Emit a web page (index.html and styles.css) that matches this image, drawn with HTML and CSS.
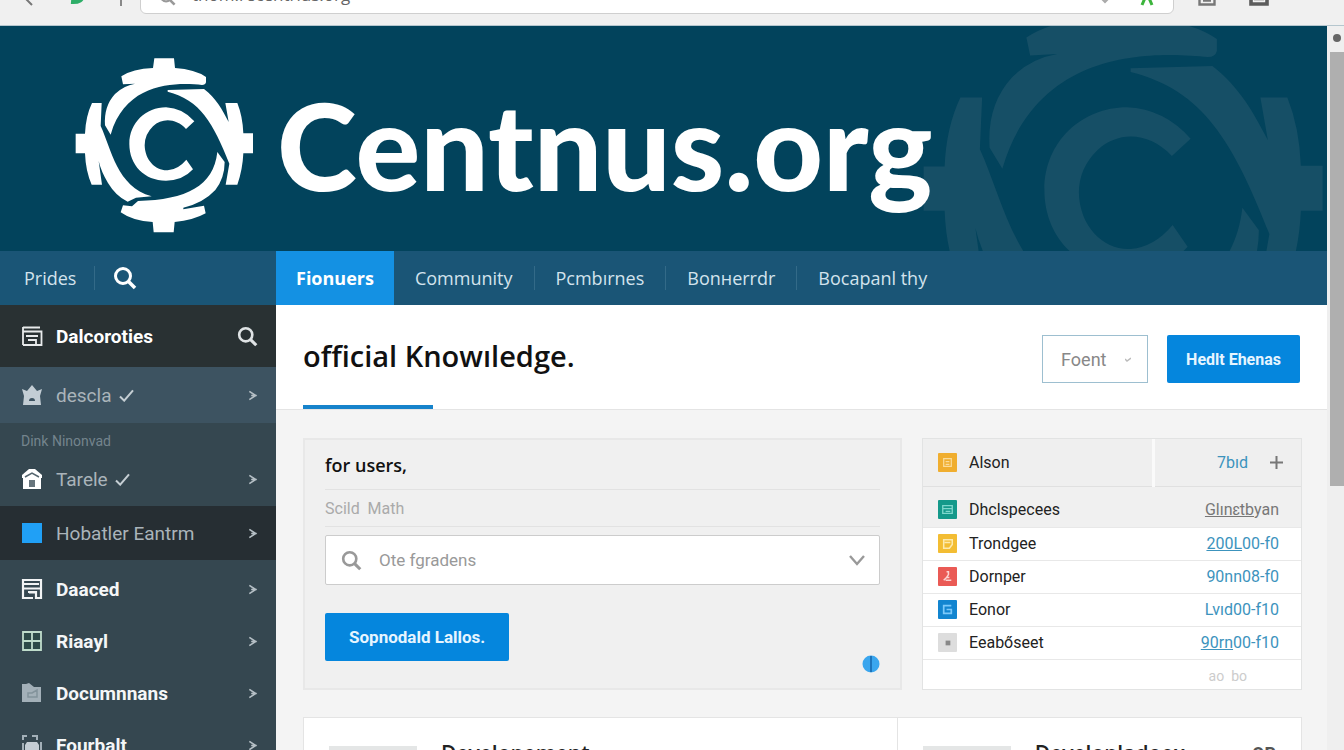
FILE: index.html
```html
<!DOCTYPE html>
<html lang="en">
<head>
  <meta charset="UTF-8">
  <title>Centnus.org</title>
  <link rel="stylesheet" href="styles.css">
</head>
<body>

  <svg class="defs" aria-hidden="true">
    <symbol id="logo" viewBox="225 172 537 528">
      <path d="M463 176H522L525 205Q585 209 618 232V248Q616 256 606 256C540 250 380 240 332 405L315 377Q311 320 345 283Q370 258 405 252L369 254L364 230Q398 207 459 205Z"/>
      <path d="M503 271L612 268C648 296 667 330 686 367L676 310H712Q728 350 730 401H759V461H730Q728 510 712 555H677L688 492C640 370 600 300 503 276Z"/>
      <path d="M652 457L674 487Q674 535 646 571Q610 610 550 624V629L612 618L617 641Q580 662 524 667L521 698H461L458 667Q398 664 362 638L369 617L396 620L414 604C560 600 640 560 652 457Z"/>
      <path d="M276 310H305L302 379C335 450 350 560 455 590L408 594L383 606Q348 590 324 550Q303 515 296 484L306 555H275Q257 515 255 461H227V402H255Q257 350 276 310Z"/>
      <path d="M583 365L558 388C528 356 487 354 459 380Q434 404 434 437C435 483 468 514 503 512Q535 509 559 480L579 509Q548 543 498 543C433 543 388 496 388 433C388 369 438 323 498 323Q548 325 583 365Z"/>
    </symbol>
    <symbol id="search" viewBox="0 0 24 24">
      <circle cx="10" cy="10" r="7.500" fill="none" stroke="currentColor" stroke-width="3"/>
      <path d="M15.500 15.500L22 22" stroke="currentColor" stroke-width="3.600"/>
    </symbol>
    <symbol id="chevron" viewBox="0 0 10 12">
      <path d="M1 1.500L8 6L1 10.500M3 6H9" stroke="currentColor" stroke-width="1.800" fill="none"/>
    </symbol>
    <symbol id="check" viewBox="0 0 16 14">
      <path d="M1 8L5.500 12.500L15 1.500" fill="none" stroke="currentColor" stroke-width="2.200"/>
    </symbol>
  </svg>

  <div class="toolbar">
    <button class="tool" aria-label="Back"><svg width="12" height="16" viewBox="0 0 12 16"><path d="M10 1L3 8L10 15" fill="none" stroke="#777" stroke-width="2"/></svg></button>
    <button class="tool" aria-label="Reload"><svg width="20" height="20" viewBox="0 0 20 20"><path d="M17 8Q17 17 5 16" fill="none" stroke="#2eae68" stroke-width="4"/></svg></button>
    <button class="tool" aria-label="New tab"><svg width="6" height="16" viewBox="0 0 6 16"><path d="M3 0V16" stroke="#888" stroke-width="2"/></svg></button>
    <div class="address">
      <svg width="17" height="17" class="address-icon"><use href="#search"/></svg>
      <input type="text" aria-label="Address" value="thom.recentrius.org">
      <svg width="22" height="18" viewBox="0 0 22 18"><path d="M1 11L4 14L7 11" fill="none" stroke="#aaa" stroke-width="2"/></svg>
      <svg width="16" height="20" viewBox="0 0 16 20"><path d="M3 19L6 12H10L13 19M8 3V12M2 7H14" fill="none" stroke="#3cb43c" stroke-width="3"/></svg>
    </div>
    <button class="tool" aria-label="Bookmarks"><svg width="20" height="20" viewBox="0 0 20 20"><path d="M2.500 3V18.500H17.500V3M6 14.500H14" fill="none" stroke="#777" stroke-width="2.400"/></svg></button>
    <button class="tool" aria-label="Menu"><svg width="20" height="20" viewBox="0 0 20 20"><path d="M2 3V18H18V3M5 12.500H15" fill="none" stroke="#5c5c5c" stroke-width="3.600"/></svg></button>
  </div>

  <div class="window">
    <div class="page">
      <header class="banner">
        <svg class="watermark" aria-hidden="true"><use href="#logo"/></svg>
        <svg class="logo" aria-hidden="true"><use href="#logo"/></svg>
        <span class="brand">Centnus.org</span>
      </header>

      <nav class="nav">
        <div class="nav-side">
          <a href="#">Prides</a>
          <button class="nav-search" aria-label="Search"><svg width="24" height="24"><use href="#search"/></svg></button>
        </div>
        <a class="tab active" href="#">Fionuers</a>
        <a class="tab" href="#">Community</a>
        <a class="tab" href="#">Pcmbırnes</a>
        <a class="tab" href="#">Bonнerrdr</a>
        <a class="tab" href="#">Bocapanl thy</a>
      </nav>

      <div class="body">
        <aside class="sidebar">
          <div class="side-row side-head">
            <svg class="icon" viewBox="0 0 22 22"><path d="M2 2.500H19M2 2V20M2 6.500H20.500V16M5 11H17M7 15H15V19M2 20H20.500V13" fill="none" stroke="#e8ebec" stroke-width="1.800"/></svg>
            <span>Dalcoroties</span>
            <button class="side-search" aria-label="Find"><svg width="21" height="21"><use href="#search"/></svg></button>
          </div>
          <a class="side-row side-light" href="#">
            <svg class="icon" viewBox="0 0 22 22"><path d="M1 5L6 7L11 1L16 7L21 5L19 12L20 21H2L3 12Z" fill="#c3cdd4"/><path d="M8 17A3 3 0 0 1 14 17Z" fill="#3d5361"/></svg>
            <span>descla</span>
            <svg class="check"><use href="#check"/></svg>
            <svg class="chevron"><use href="#chevron"/></svg>
          </a>
          <p class="side-label">Dink Ninonvad</p>
          <a class="side-row side-short" href="#">
            <svg class="icon" viewBox="0 0 22 22"><path d="M1 7L8 1H14L21 7V10H1Z" fill="#fff"/><path d="M2 10H20V21H2Z" fill="#fff"/><path d="M4 9L11 5L18 9" fill="none" stroke="#54656e" stroke-width="1.500"/><path d="M8 12H14V19H8Z" fill="#67757d"/></svg>
            <span>Tarele</span>
            <svg class="check"><use href="#check"/></svg>
            <svg class="chevron"><use href="#chevron"/></svg>
          </a>
          <a class="side-row side-dark" href="#">
            <svg class="icon" viewBox="0 0 22 22"><path d="M1 1H21V21H1Z" fill="#20a0f6"/></svg>
            <span>Hobatler Eantrm</span>
            <svg class="chevron"><use href="#chevron"/></svg>
          </a>
          <div class="side-list">
            <a class="side-row" href="#">
              <svg class="icon" viewBox="0 0 22 22"><path d="M2 2H20V20H15V14H7M2 1V20H12M2 6H18M3 10.500H19M8 14.500H14" fill="none" stroke="#f2f4f5" stroke-width="2.200"/></svg>
              <span>Daaced</span>
              <svg class="chevron"><use href="#chevron"/></svg>
            </a>
            <a class="side-row" href="#">
              <svg class="icon" viewBox="0 0 22 22"><path d="M2 2H20V20H2ZM11 2V20M2 11H20" fill="#2d4a48" stroke="#bfdccb" stroke-width="1.800"/></svg>
              <span>Riaayl</span>
              <svg class="chevron"><use href="#chevron"/></svg>
            </a>
            <a class="side-row" href="#">
              <svg class="icon" viewBox="0 0 22 22"><path d="M1 2H5L8 1L13 5H20V20H1Z" fill="#a3b0b8"/><path d="M7 15V11H11L16 8V15Z" fill="none" stroke="#82929b" stroke-width="1.500"/></svg>
              <span>Documnnans</span>
              <svg class="chevron"><use href="#chevron"/></svg>
            </a>
            <a class="side-row" href="#">
              <svg class="icon" viewBox="0 0 22 22"><path d="M2 6V2H6M11 2H16V6M2 9V20M20 8V20" fill="none" stroke="#a3b0b8" stroke-width="2"/><path d="M4 11L6 8H16L18 11V16H4Z" fill="#c3cdd4"/></svg>
              <span>Fourbalt</span>
              <svg class="chevron"><use href="#chevron"/></svg>
            </a>
          </div>
        </aside>

        <main class="main">
          <div class="title-bar">
            <h1>official Knowıledge.</h1>
            <div class="actions">
              <div class="select-wrap">
                <select class="select-small" aria-label="Foent"><option>Foent</option></select>
                <svg width="6" height="5" viewBox="0 0 6 5"><path d="M0 2L2 4L6 1" fill="none" stroke="#bbb" stroke-width="1.500"/></svg>
              </div>
              <button class="btn">Hedlt Ehenas</button>
            </div>
          </div>

          <div class="cards">
            <section class="card form-card">
              <h2>for users,</h2>
              <label for="topic">Scild &nbsp;Math</label>
              <div class="combo">
                <svg width="21" height="21"><use href="#search"/></svg>
                <select id="topic"><option>Ote fgradens</option></select>
                <svg width="18" height="12" viewBox="0 0 18 12"><path d="M2 2L9 10L16 2" fill="none" stroke="#999" stroke-width="2.400"/></svg>
              </div>
              <div class="form-foot">
                <button class="btn btn-form">Sopnodald Lallos.</button>
                <svg class="dot" width="18" height="18" viewBox="0 0 18 18"><circle cx="9" cy="9" r="8.500" fill="#3aa6ee"/><path d="M9 1V17" stroke="#1d74bb" stroke-width="2"/></svg>
              </div>
            </section>

            <section class="card list-card">
              <table>
                <thead>
                  <tr>
                    <th><span class="cell"><svg class="tile" viewBox="0 0 20 20"><rect width="20" height="20" rx="1" fill="#f0ae2f"/><path d="M6 6H14V14H6ZM8 9H12M8 12H12" fill="none" stroke="#fbdc9a" stroke-width="1.300"/></svg>Alson</span></th>
                    <th class="last"><span class="cell cell-end"><a href="#">7bıd</a><button aria-label="Add"><svg width="13" height="13" viewBox="0 0 13 13"><path d="M6.500 0V13M0 6.500H13" stroke="#777" stroke-width="2"/></svg></button></span></th>
                  </tr>
                </thead>
                <tbody>
                  <tr class="first">
                    <td><span class="cell"><svg class="tile" viewBox="0 0 20 20"><rect width="20" height="20" rx="1" fill="#14998a"/><path d="M5 6H15V14H5ZM5 9H15M8 12H13" fill="none" stroke="#7fd8cd" stroke-width="1.400"/></svg>Dhclspecees</span></td>
                    <td class="last"><a href="#"><u>Glınɛtb</u>yan</a></td>
                  </tr>
                  <tr>
                    <td><span class="cell"><svg class="tile" viewBox="0 0 20 20"><rect width="20" height="20" rx="1" fill="#f3bd33"/><path d="M6 6H15V11L12 15H6ZM7 9H13" fill="none" stroke="#fdeaae" stroke-width="1.600"/></svg>Trondgee</span></td>
                    <td class="last"><a href="#"><u>200L</u>00-f0</a></td>
                  </tr>
                  <tr>
                    <td><span class="cell"><svg class="tile" viewBox="0 0 20 20"><rect width="20" height="20" rx="1" fill="#ea5a55"/><path d="M9 5H11V8L9 11H12M6 14L9 11M8 14H14" fill="none" stroke="#fcd4d2" stroke-width="1.600"/></svg>Dornper</span></td>
                    <td class="last"><a href="#">90nn08-f0</a></td>
                  </tr>
                  <tr>
                    <td><span class="cell"><svg class="tile" viewBox="0 0 20 20"><rect width="20" height="20" rx="1" fill="#1285d0"/><path d="M14 6H6V14H14V10H9" fill="none" stroke="#7cc9fa" stroke-width="1.800"/></svg>Eonor</span></td>
                    <td class="last"><a href="#">Lvıd00-f10</a></td>
                  </tr>
                  <tr>
                    <td><span class="cell"><svg class="tile" viewBox="0 0 20 20"><rect width="20" height="20" rx="1" fill="#ddd"/><path d="M8 8H13V13H8Z" fill="#888"/></svg>Eeabőseet</span></td>
                    <td class="last"><a href="#"><u>90rn</u>00-f10</a></td>
                  </tr>
                </tbody>
              </table>
              <p class="list-foot">ao &nbsp;bo</p>
            </section>
          </div>

          <div class="results">
            <article class="result">
              <div class="thumb"></div>
              <h3>Developement</h3>
            </article>
            <article class="result">
              <div class="thumb"></div>
              <h3>Developladoex</h3>
              <span class="result-mark">OB</span>
            </article>
          </div>
        </main>
      </div>
    </div>

    <div class="scrollbar">
      <div class="scroll-cap"></div>
      <div class="scroll-thumb"></div>
    </div>
  </div>

</body>
</html>
```
FILE: styles.css
```css
* {
  box-sizing: border-box;
}
body {
  margin: 0;
  height: 100vh;
  display: flex;
  flex-direction: column;
  overflow: hidden;
  background: #f4f4f4;
  color: #222;
  font-family: Roboto, "Liberation Sans", sans-serif;
  font-size: 18px;
}
a {
  color: inherit;
  text-decoration: none;
}
button {
  border: 0;
  padding: 0;
  background: none;
  font: inherit;
  color: inherit;
  display: flex;
  align-items: center;
  justify-content: center;
}
h1, h2, h3, p {
  margin: 0;
}
.defs {
  display: none;
}

/* browser toolbar */
.toolbar {
  flex: none;
  height: 26px;
  display: flex;
  align-items: flex-end;
  gap: 32px;
  padding: 0 75px 11px 22px;
  background: #f0f0f0;
  border-bottom: 1px solid #b5c6ce;
}
.tool {
  height: 28px;
  padding-bottom: 8px;
  align-items: flex-end;
}
.address {
  flex: 1;
  height: 40px;
  margin: 0 -9px 0 -16px;
  display: flex;
  align-items: flex-end;
  gap: 16px;
  padding: 0 18px 7px;
  background: #fff;
  border: 1px solid #cfcfcf;
  border-radius: 6px;
}
.address-icon {
  color: #999;
}
.address input {
  flex: 1;
  border: 0;
  padding: 0;
  font: 17px/22px "Open Sans", sans-serif;
  color: #666;
  background: none;
}

.window {
  flex: 1;
  min-height: 0;
  display: flex;
}
.page {
  flex: 1;
  min-width: 0;
  display: flex;
  flex-direction: column;
}
.scrollbar {
  flex: none;
  width: 17px;
  padding-left: 3px;
  background: #efefef;
  display: flex;
  flex-direction: column;
  align-items: center;
}
.scroll-cap {
  width: 8px;
  height: 8px;
  margin: 8px 0 10px;
  border-radius: 50%;
  background: #666;
}
.scroll-thumb {
  width: 100%;
  height: 60%;
  background: #afafaf;
}

/* banner */
.banner {
  flex: none;
  height: 225px;
  position: relative;
  overflow: hidden;
  display: flex;
  align-items: center;
  gap: 23px;
  padding: 16px 75px 4px;
  background: #02435c;
}
.logo {
  flex: none;
  width: 179px;
  height: 176px;
  fill: #fff;
}
.watermark {
  position: absolute;
  top: -32px;
  right: 2px;
  width: 403px;
  height: 396px;
  fill: #164f66;
}
.brand {
  position: relative;
  font: 900 121px/150px Lato, sans-serif;
  color: #fff;
}

/* nav */
.nav {
  flex: none;
  height: 54px;
  display: flex;
  align-items: center;
  background: #1a5576;
  color: #d3e3ed;
  font: 18px/24px "Open Sans", sans-serif;
}
.nav-side {
  width: 276px;
  display: flex;
  align-items: center;
  padding-left: 24px;
}
.nav-side a {
  padding-right: 18px;
  border-right: 1px solid #336a88;
}
.nav-search {
  margin-left: 18px;
  color: #fff;
}
.tab {
  padding: 0 21px;
  border-right: 1px solid #336a88;
}
.tab:last-child {
  border-right: 0;
}
.tab.active {
  align-self: stretch;
  display: flex;
  align-items: center;
  padding: 0 20px;
  border-right: 0;
  background: #1491e3;
  color: #fff;
  font-weight: 700;
}

.body {
  flex: 1;
  min-height: 0;
  display: flex;
}

/* sidebar */
.sidebar {
  flex: none;
  width: 276px;
  overflow: hidden;
  background: #354750;
  color: #aab4ba;
}
.side-row {
  height: 52px;
  display: flex;
  align-items: center;
  padding: 0 18px 0 21px;
  font-size: 19px;
}
.side-row .icon {
  width: 22px;
  height: 22px;
  margin-right: 13px;
}
.side-head {
  height: 62px;
  background: #293133;
  color: #fff;
  font-weight: 700;
}
.side-search {
  margin-left: auto;
  color: #dfe3e5;
}
.side-light {
  height: 56px;
  background: #3d5361;
}
.side-label {
  padding: 8px 21px 7px;
  font-size: 14px;
  line-height: 20px;
  color: #74848d;
}
.side-short {
  height: 48px;
  padding-bottom: 6px;
}
.side-dark {
  height: 54px;
  background: #262e33;
}
.side-list {
  padding-top: 3px;
  color: #f4f6f7;
  font-weight: 700;
}
.check {
  width: 15px;
  height: 13px;
  margin-left: 7px;
  color: #c5ced3;
}
.chevron {
  width: 10px;
  height: 11px;
  margin-left: auto;
  color: #b5bfc5;
}

/* main */
.main {
  flex: 1;
  min-width: 0;
  overflow: hidden;
}
.title-bar {
  height: 105px;
  display: flex;
  justify-content: space-between;
  padding: 30px 27px 0;
  background: #fff;
  border-bottom: 1px solid #e4e4e4;
}
h1 {
  position: relative;
  font: 600 29px/42px "Open Sans", sans-serif;
  color: #111;
}
h1::after {
  content: "";
  position: absolute;
  left: 0;
  bottom: 0;
  width: 130px;
  height: 4px;
  background: #1683cb;
}
.actions {
  display: flex;
  gap: 19px;
}
.select-wrap {
  width: 106px;
  height: 48px;
  display: flex;
  align-items: center;
  padding: 0 16px 0 18px;
  border: 1px solid #9dbfd0;
}
.select-small {
  appearance: none;
  flex: 1;
  min-width: 0;
  border: 0;
  padding: 0;
  background: none;
  color: #888;
  font: 18px Roboto, sans-serif;
}
.btn {
  height: 48px;
  padding: 0 19px;
  border-radius: 2px;
  background: #0586dd;
  color: #e6f5ff;
  font-size: 16px;
  font-weight: 700;
}
.cards {
  display: grid;
  grid-template-columns: 599fr 380fr;
  gap: 20px;
  padding: 28px 25px 27px 27px;
}
.card {
  height: 252px;
  border: 1px solid #e2e3e3;
}
.form-card {
  padding: 13px 20px;
  background: #f0f0f0;
  border: 2px solid #e8e8e8;
}
h2 {
  padding-bottom: 12px;
  border-bottom: 1px solid #e2e2e2;
  font: 600 18px/24px "Open Sans", sans-serif;
  color: #111;
}
label {
  display: block;
  height: 37px;
  border-bottom: 1px solid #e2e2e2;
  font-size: 16px;
  line-height: 38px;
  color: #aaa;
}
.combo {
  height: 50px;
  margin: 8px 0 28px;
  display: flex;
  align-items: center;
  gap: 17px;
  padding: 0 13px 0 15px;
  background: #fff;
  border: 1px solid #ccc;
  border-radius: 2px;
  color: #999;
}
.combo select {
  appearance: none;
  flex: 1;
  border: 0;
  padding: 0;
  background: none;
  color: #999;
  font: 17px Roboto, sans-serif;
}
.form-foot {
  display: flex;
  align-items: flex-end;
  justify-content: space-between;
}
.btn-form {
  padding: 0 24px;
  font-size: 17px;
}
.dot {
  margin-bottom: -12px;
}

/* list */
.list-card {
  background: #fff;
}
table {
  width: 100%;
  border-collapse: collapse;
  font-size: 16px;
}
th {
  height: 47px;
  padding: 0 0 0 15px;
  background: #efefef;
  border-bottom: 1px solid #e0e0e0;
  font-weight: 400;
  text-align: left;
}
td {
  height: 33px;
  padding: 0 0 0 15px;
  border-bottom: 1px solid #e8e8e8;
}
th.last {
  border-left: 3px solid #fafafa;
}
.last {
  width: 148px;
  padding: 0 22px 0 0;
  text-align: right;
  color: #3c93bd;
}
th.last {
  padding-right: 18px;
}
.first td {
  height: 41px;
  padding-top: 6px;
  background: #f0f0f0;
}
.first .last {
  color: #777;
}
.cell {
  display: flex;
  align-items: center;
  gap: 12px;
}
.cell-end {
  justify-content: flex-end;
  gap: 22px;
}
.tile {
  flex: none;
  width: 19px;
  height: 19px;
}
.list-foot {
  padding: 8px 54px 0 0;
  font-size: 14px;
  text-align: right;
  color: #ccc;
}

/* results */
.results {
  display: grid;
  grid-template-columns: 594fr 405fr;
  margin: 0 25px 0 27px;
  background: #fff;
  border: 1px solid #e4e4e4;
}
.result {
  height: 120px;
  display: flex;
  gap: 24px;
  padding: 20px 25px;
}
.result + .result {
  border-left: 1px solid #e4e4e4;
}
.thumb {
  width: 88px;
  height: 70px;
  margin-top: 8px;
  background: #e4e6e6;
}
h3 {
  font: 600 21px/30px "Open Sans", sans-serif;
  color: #222;
}
.result-mark {
  margin-left: auto;
  line-height: 32px;
  font-weight: 700;
  color: #555;
}
```
